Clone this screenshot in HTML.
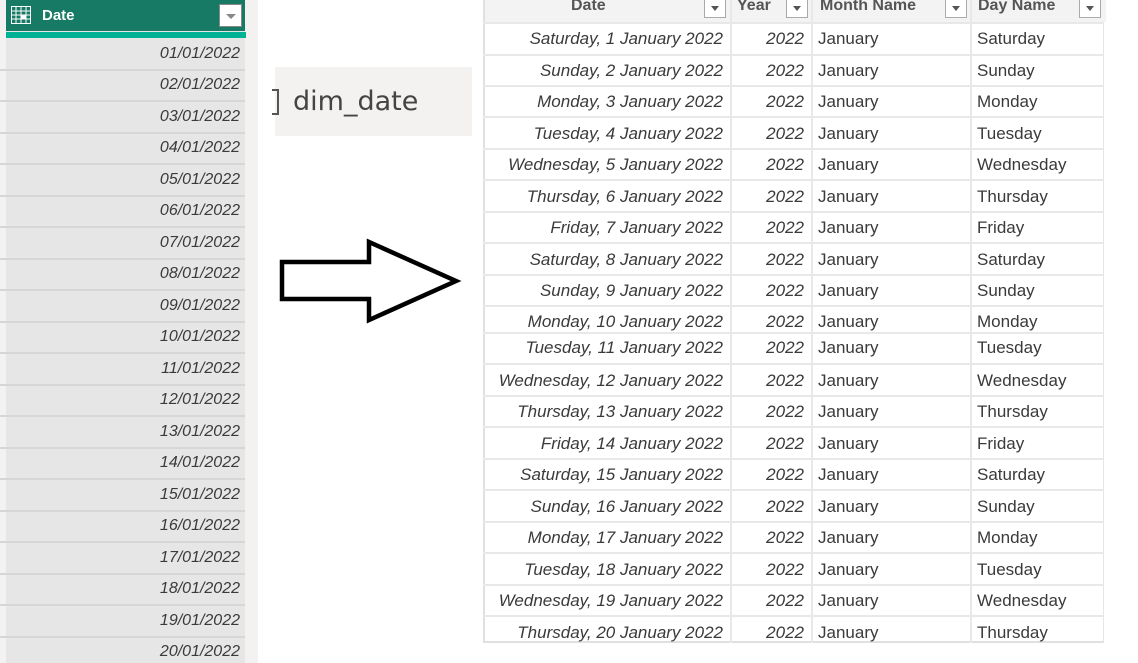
<!DOCTYPE html>
<html><head><meta charset="utf-8"><style>
*{margin:0;padding:0;box-sizing:border-box}
body{width:1138px;height:663px;background:#fff;position:relative;overflow:hidden;font-family:"Liberation Sans",sans-serif}
.lp{position:absolute;left:0;top:0;width:258px;height:663px;background:#f3f2f1}
.lc{position:absolute;left:6px;top:0;width:239px;height:663px;background:#e6e6e6}
.hd{position:absolute;left:6px;top:0;width:239px;height:31px;background:#167a64;color:#fff;font-weight:bold;font-size:15px}
.st{position:absolute;left:6px;top:32px;width:240px;height:6px;background:#00b294}
.lr{position:absolute;left:0;width:245px;border-top:2px solid #d6d6d6}
.lt{position:absolute;right:898px;font-style:italic;font-size:16px;color:#3a3a3a;width:200px;text-align:right}
.rt{position:absolute;left:483px;top:0;width:621px;height:643px;border-left:2px solid #e0e0e0;border-right:1px solid #e6e6e6;border-bottom:2px solid #e0e0e0}
.rh{position:absolute;left:0;top:0;width:621px;height:22px;background:#f3f3f3}
.rl{position:absolute;left:483px;width:621px;border-top:2px solid #e8e8e8}
.vl{position:absolute;top:0;height:643px;border-left:2px solid #e8e8e8}
.c{position:absolute;font-size:17px;color:#3a3a3a;line-height:22px}
.i{font-style:italic;text-align:right}
.h{position:absolute;top:-3px;font-weight:bold;font-size:16px;color:#555}
.dd{position:absolute;top:0;width:22px;height:18px;background:#fff;border:1px solid #aaa;border-top:none}
.dd:after{content:"";position:absolute;left:6px;top:6px;border-left:4px solid transparent;border-right:4px solid transparent;border-top:5px solid #555}
</style></head><body>
<div class="lp"></div><div class="lc"></div>
<div class="hd">
<svg style="position:absolute;left:5px;top:6px" width="20" height="18" viewBox="0 0 20 18"><rect x="0.5" y="0.5" width="19" height="17" fill="none" stroke="#fff"/><path d="M0 5H20M0 9H20M0 13H20M5 0V18M10 0V18M15 0V18" stroke="#fff" stroke-width="1"/><rect x="10" y="9" width="5" height="4" fill="#fff"/></svg>
<span style="position:absolute;left:36px;top:7px">Date</span>
<div style="position:absolute;left:213px;top:4px;width:23px;height:23px;background:#fff;border:1px solid #888"><div style="position:absolute;left:6px;top:9px;border-left:5px solid transparent;border-right:5px solid transparent;border-top:5px solid #888"></div></div>
</div>
<div class="st"></div>
<div class="lr" style="top:69px"></div><div class="lr" style="top:100px"></div><div class="lr" style="top:132px"></div><div class="lr" style="top:163px"></div><div class="lr" style="top:195px"></div><div class="lr" style="top:226px"></div><div class="lr" style="top:258px"></div><div class="lr" style="top:289px"></div><div class="lr" style="top:321px"></div><div class="lr" style="top:352px"></div><div class="lr" style="top:384px"></div><div class="lr" style="top:415px"></div><div class="lr" style="top:447px"></div><div class="lr" style="top:478px"></div><div class="lr" style="top:510px"></div><div class="lr" style="top:541px"></div><div class="lr" style="top:573px"></div><div class="lr" style="top:604px"></div><div class="lr" style="top:636px"></div>
<div class="lt" style="top:45px">01/01/2022</div><div class="lt" style="top:76px">02/01/2022</div><div class="lt" style="top:108px">03/01/2022</div><div class="lt" style="top:139px">04/01/2022</div><div class="lt" style="top:171px">05/01/2022</div><div class="lt" style="top:202px">06/01/2022</div><div class="lt" style="top:234px">07/01/2022</div><div class="lt" style="top:265px">08/01/2022</div><div class="lt" style="top:297px">09/01/2022</div><div class="lt" style="top:328px">10/01/2022</div><div class="lt" style="top:360px">11/01/2022</div><div class="lt" style="top:391px">12/01/2022</div><div class="lt" style="top:423px">13/01/2022</div><div class="lt" style="top:454px">14/01/2022</div><div class="lt" style="top:486px">15/01/2022</div><div class="lt" style="top:517px">16/01/2022</div><div class="lt" style="top:549px">17/01/2022</div><div class="lt" style="top:580px">18/01/2022</div><div class="lt" style="top:612px">19/01/2022</div><div class="lt" style="top:643px">20/01/2022</div>

<div style="position:absolute;left:275px;top:67px;width:197px;height:69px;background:#f3f2f1"></div>
<div style="position:absolute;left:272px;top:89px;width:7px;height:26px;border:2px solid #555;border-left:none"></div>
<div style="position:absolute;left:293px;top:86px;font-size:27px;color:#444;font-family:'DejaVu Sans',sans-serif">dim_date</div>

<svg style="position:absolute;left:0;top:0" width="1138" height="663"><path d="M282 262H369V242L456 281L369 320V299H282Z" fill="#fff" stroke="#000" stroke-width="4.5" stroke-linejoin="miter"/></svg>

<div class="rt"><div class="rh"></div></div>
<div class="vl" style="left:730px"></div><div class="vl" style="left:811px"></div><div class="vl" style="left:970px"></div>
<div class="h" style="left:571px">Date</div><div class="dd" style="left:704px"></div>
<div class="h" style="left:737px">Year</div><div class="dd" style="left:786px"></div>
<div class="h" style="left:820px">Month Name</div><div class="dd" style="left:945px"></div>
<div class="h" style="left:978px">Day Name</div><div class="dd" style="left:1079px"></div>

<div class="rl" style="top:22px"></div><div class="rl" style="top:54px"></div><div class="rl" style="top:85px"></div><div class="rl" style="top:116px"></div><div class="rl" style="top:148px"></div><div class="rl" style="top:179px"></div><div class="rl" style="top:211px"></div><div class="rl" style="top:242px"></div><div class="rl" style="top:274px"></div><div class="rl" style="top:305px"></div><div class="rl" style="top:332px"></div><div class="rl" style="top:363px"></div><div class="rl" style="top:395px"></div><div class="rl" style="top:426px"></div><div class="rl" style="top:458px"></div><div class="rl" style="top:489px"></div><div class="rl" style="top:521px"></div><div class="rl" style="top:552px"></div><div class="rl" style="top:584px"></div><div class="rl" style="top:615px"></div>

<div style="position:absolute;left:0;top:0">
<div class="c i" style="left:430px;width:293px;top:28px">Saturday, 1 January 2022</div><div class="c i" style="left:740px;width:64px;top:28px">2022</div><div class="c" style="left:818px;top:28px">January</div><div class="c" style="left:977px;top:28px">Saturday</div>
<div class="c i" style="left:430px;width:293px;top:60px">Sunday, 2 January 2022</div><div class="c i" style="left:740px;width:64px;top:60px">2022</div><div class="c" style="left:818px;top:60px">January</div><div class="c" style="left:977px;top:60px">Sunday</div>
<div class="c i" style="left:430px;width:293px;top:91px">Monday, 3 January 2022</div><div class="c i" style="left:740px;width:64px;top:91px">2022</div><div class="c" style="left:818px;top:91px">January</div><div class="c" style="left:977px;top:91px">Monday</div>
<div class="c i" style="left:430px;width:293px;top:123px">Tuesday, 4 January 2022</div><div class="c i" style="left:740px;width:64px;top:123px">2022</div><div class="c" style="left:818px;top:123px">January</div><div class="c" style="left:977px;top:123px">Tuesday</div>
<div class="c i" style="left:430px;width:293px;top:154px">Wednesday, 5 January 2022</div><div class="c i" style="left:740px;width:64px;top:154px">2022</div><div class="c" style="left:818px;top:154px">January</div><div class="c" style="left:977px;top:154px">Wednesday</div>
<div class="c i" style="left:430px;width:293px;top:186px">Thursday, 6 January 2022</div><div class="c i" style="left:740px;width:64px;top:186px">2022</div><div class="c" style="left:818px;top:186px">January</div><div class="c" style="left:977px;top:186px">Thursday</div>
<div class="c i" style="left:430px;width:293px;top:217px">Friday, 7 January 2022</div><div class="c i" style="left:740px;width:64px;top:217px">2022</div><div class="c" style="left:818px;top:217px">January</div><div class="c" style="left:977px;top:217px">Friday</div>
<div class="c i" style="left:430px;width:293px;top:249px">Saturday, 8 January 2022</div><div class="c i" style="left:740px;width:64px;top:249px">2022</div><div class="c" style="left:818px;top:249px">January</div><div class="c" style="left:977px;top:249px">Saturday</div>
<div class="c i" style="left:430px;width:293px;top:280px">Sunday, 9 January 2022</div><div class="c i" style="left:740px;width:64px;top:280px">2022</div><div class="c" style="left:818px;top:280px">January</div><div class="c" style="left:977px;top:280px">Sunday</div>
<div class="c i" style="left:430px;width:293px;top:311px">Monday, 10 January 2022</div><div class="c i" style="left:740px;width:64px;top:311px">2022</div><div class="c" style="left:818px;top:311px">January</div><div class="c" style="left:977px;top:311px">Monday</div>
<div class="c i" style="left:430px;width:293px;top:337px">Tuesday, 11 January 2022</div><div class="c i" style="left:740px;width:64px;top:337px">2022</div><div class="c" style="left:818px;top:337px">January</div><div class="c" style="left:977px;top:337px">Tuesday</div>
<div class="c i" style="left:430px;width:293px;top:370px">Wednesday, 12 January 2022</div><div class="c i" style="left:740px;width:64px;top:370px">2022</div><div class="c" style="left:818px;top:370px">January</div><div class="c" style="left:977px;top:370px">Wednesday</div>
<div class="c i" style="left:430px;width:293px;top:401px">Thursday, 13 January 2022</div><div class="c i" style="left:740px;width:64px;top:401px">2022</div><div class="c" style="left:818px;top:401px">January</div><div class="c" style="left:977px;top:401px">Thursday</div>
<div class="c i" style="left:430px;width:293px;top:433px">Friday, 14 January 2022</div><div class="c i" style="left:740px;width:64px;top:433px">2022</div><div class="c" style="left:818px;top:433px">January</div><div class="c" style="left:977px;top:433px">Friday</div>
<div class="c i" style="left:430px;width:293px;top:464px">Saturday, 15 January 2022</div><div class="c i" style="left:740px;width:64px;top:464px">2022</div><div class="c" style="left:818px;top:464px">January</div><div class="c" style="left:977px;top:464px">Saturday</div>
<div class="c i" style="left:430px;width:293px;top:496px">Sunday, 16 January 2022</div><div class="c i" style="left:740px;width:64px;top:496px">2022</div><div class="c" style="left:818px;top:496px">January</div><div class="c" style="left:977px;top:496px">Sunday</div>
<div class="c i" style="left:430px;width:293px;top:527px">Monday, 17 January 2022</div><div class="c i" style="left:740px;width:64px;top:527px">2022</div><div class="c" style="left:818px;top:527px">January</div><div class="c" style="left:977px;top:527px">Monday</div>
<div class="c i" style="left:430px;width:293px;top:559px">Tuesday, 18 January 2022</div><div class="c i" style="left:740px;width:64px;top:559px">2022</div><div class="c" style="left:818px;top:559px">January</div><div class="c" style="left:977px;top:559px">Tuesday</div>
<div class="c i" style="left:430px;width:293px;top:590px">Wednesday, 19 January 2022</div><div class="c i" style="left:740px;width:64px;top:590px">2022</div><div class="c" style="left:818px;top:590px">January</div><div class="c" style="left:977px;top:590px">Wednesday</div>
<div class="c i" style="left:430px;width:293px;top:622px">Thursday, 20 January 2022</div><div class="c i" style="left:740px;width:64px;top:622px">2022</div><div class="c" style="left:818px;top:622px">January</div><div class="c" style="left:977px;top:622px">Thursday</div>
</div>
</body></html>
